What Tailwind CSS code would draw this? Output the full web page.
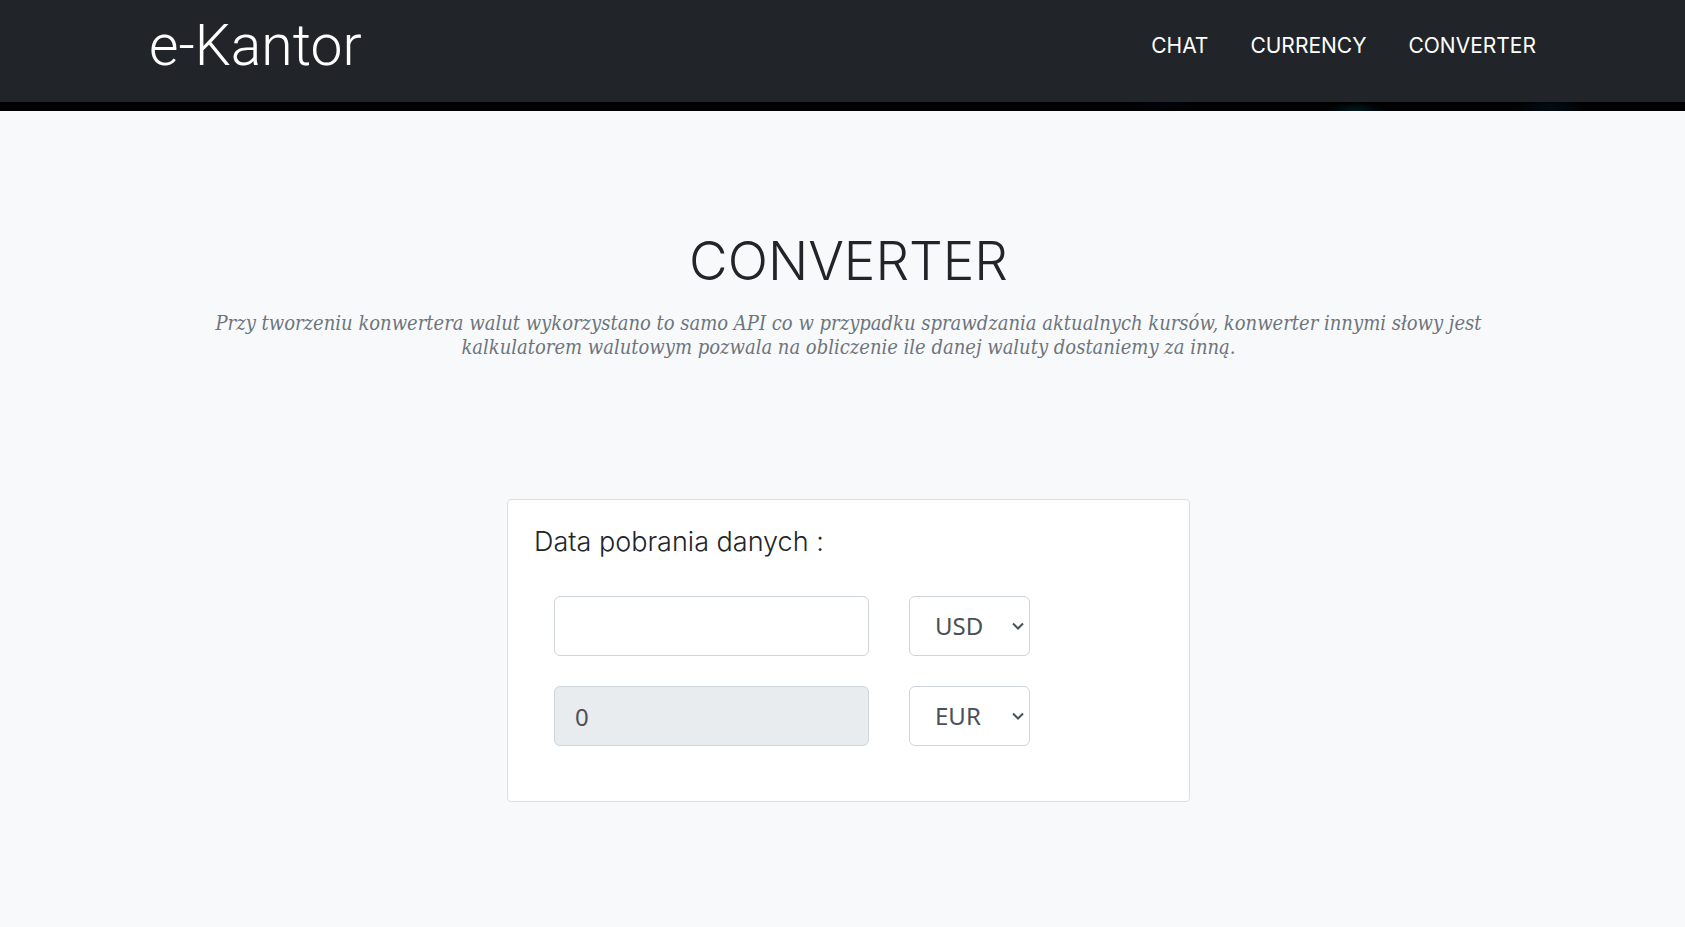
<!DOCTYPE html>
<html lang="pl">
<head>
<meta charset="utf-8">
<meta name="viewport" content="width=device-width, initial-scale=1">
<title>e-Kantor</title>
<script src="https://cdn.jsdelivr.net/npm/@tailwindcss/browser@4"></script>
</head>
<body class="min-h-screen bg-[#f8f9fa] font-['Inter',sans-serif] text-[#212529]">
<header class="flex h-[102px] items-start justify-between bg-[#212529] px-[149px] text-white">
  <a href="#" class="pt-4 font-['Roboto',sans-serif] text-[57px] leading-[60px] font-light">e-Kantor</a>
  <nav class="flex gap-[42px] pt-8 text-[21px] leading-7">
    <a href="#chat">CHAT</a>
    <a href="#currency">CURRENCY</a>
    <a href="#converter">CONVERTER</a>
  </nav>
</header>
<div class="h-[9px] bg-black bg-[radial-gradient(30px_9px_at_80.5%_100%,#001a22,transparent),radial-gradient(40px_9px_at_92%_60%,#000e18,transparent),radial-gradient(40px_9px_at_69%_20%,#00040e,transparent)]"></div>
<main class="flex flex-col items-center pt-[118px] pb-16 pl-3">
  <h1 class="text-[53px] leading-[64px] font-light">CONVERTER</h1>
  <p class="mt-[18px] max-w-[1340px] text-center font-['DejaVu_Serif_Condensed','DejaVu_Serif',serif] text-[20px] leading-6 text-[#6c757d] italic">Przy tworzeniu konwertera walut wykorzystano to samo API co w przypadku sprawdzania aktualnych kursów, konwerter innymi słowy jest<br>kalkulatorem walutowym pozwala na obliczenie ile danej waluty dostaniemy za inną.</p>
  <section class="mt-[140px] w-full max-w-[683px] rounded border border-[#dfdfdf] bg-white px-[26px] pt-6 pb-[55px]">
    <h2 class="text-[27px] leading-9 font-light">Data pobrania danych :</h2>
    <form class="mt-9 grid grid-cols-[315px_121px] gap-x-10 gap-y-[30px] pl-5 font-['Noto_Sans',sans-serif] text-2xl text-[#495057]">
      <input type="text" aria-label="Kwota" class="h-[60px] w-full rounded-md border border-[#ced4da] bg-white px-5">
      <div class="relative">
        <select aria-label="Waluta źródłowa" class="h-[60px] w-full appearance-none rounded-md border border-[#ced4da] bg-white pl-[25px]"><option>USD</option><option>EUR</option></select>
        <svg class="pointer-events-none absolute top-[26px] right-[6px] h-2 w-3" viewBox="0 0 12 8" fill="none" stroke="#495057" stroke-width="2"><path d="M1 1.5l5 5 5-5"/></svg>
      </div>
      <input type="text" aria-label="Wynik" value="0" readonly class="h-[60px] w-full rounded-md border border-[#ced4da] bg-[#e9ecef] px-5">
      <div class="relative">
        <select aria-label="Waluta docelowa" class="h-[60px] w-full appearance-none rounded-md border border-[#ced4da] bg-white pl-[25px]"><option>EUR</option><option>USD</option></select>
        <svg class="pointer-events-none absolute top-[26px] right-[6px] h-2 w-3" viewBox="0 0 12 8" fill="none" stroke="#495057" stroke-width="2"><path d="M1 1.5l5 5 5-5"/></svg>
      </div>
    </form>
  </section>
</main>
</body>
</html>
